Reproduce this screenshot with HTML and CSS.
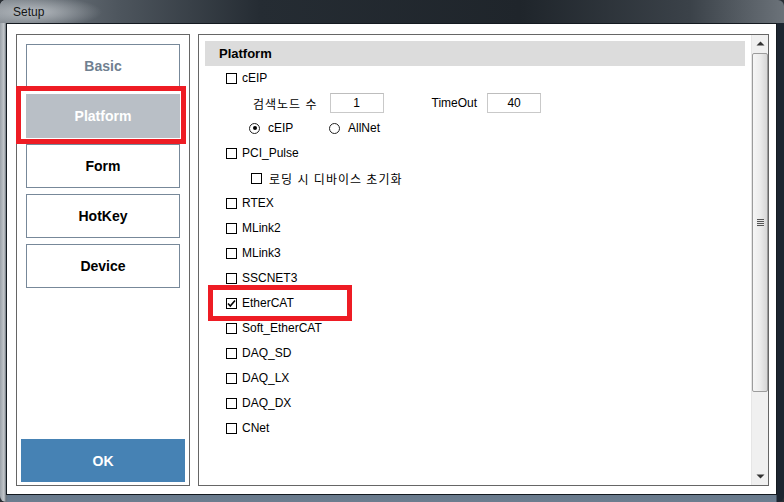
FILE: index.html
```html
<!DOCTYPE html>
<html lang="ko">
<head>
    <meta charset="UTF-8">
    <title>Setup</title>
    <link rel="stylesheet" href="styles.css">
</head>
<body>
    <div class="window">
        <div class="titlebar">
            <span class="title">Setup</span>
        </div>
        <div class="client">

            <div class="side">
                <div class="nav-btn basic">Basic</div>
                <div class="nav-btn active">Platform</div>
                <div class="nav-btn">Form</div>
                <div class="nav-btn">HotKey</div>
                <div class="nav-btn">Device</div>

                <div class="ok-btn">OK</div>

                <div class="mark mark-platform"></div>
            </div>

            <div class="panel">
                <div class="content">
                    <div class="panel-head">Platform</div>

                    <div class="item"><span class="cb"></span>cEIP</div>
                    <div class="item sub-input">
                        <span class="kr">검색노드 수</span>
                        <span class="num-box">1</span>
                        <span class="lbl-timeout">TimeOut</span>
                        <span class="num-box">40</span>
                    </div>
                    <div class="item sub-radio">
                        <span class="radio-opt"><span class="rb on"></span>cEIP</span>
                        <span class="radio-opt"><span class="rb"></span>AllNet</span>
                    </div>
                    <div class="item"><span class="cb"></span>PCI_Pulse</div>
                    <div class="item sub-check"><span class="cb"></span><span class="kr">로딩 시 디바이스 초기화</span></div>
                    <div class="item"><span class="cb"></span>RTEX</div>
                    <div class="item"><span class="cb"></span>MLink2</div>
                    <div class="item"><span class="cb"></span>MLink3</div>
                    <div class="item"><span class="cb"></span>SSCNET3</div>
                    <div class="item">
                        <span class="cb">
                            <svg width="9" height="9" viewBox="0 0 9 9"><path d="M1 4.5 L3.3 7 L8 1.5" fill="none" stroke="#000" stroke-width="1.6"/></svg>
                        </span>EtherCAT
                    </div>
                    <div class="item"><span class="cb"></span>Soft_EtherCAT</div>
                    <div class="item"><span class="cb"></span>DAQ_SD</div>
                    <div class="item"><span class="cb"></span>DAQ_LX</div>
                    <div class="item"><span class="cb"></span>DAQ_DX</div>
                    <div class="item"><span class="cb"></span>CNet</div>

                    <div class="mark mark-ethercat"></div>
                </div>

                <div class="scrollbar">
                    <div class="sb-arrow">
                        <svg width="9" height="5" viewBox="0 0 9 5"><path d="M0.5 4.5 L4.5 0.5 L8.5 4.5 Z" fill="#333"/></svg>
                    </div>
                    <div class="sb-track">
                        <div class="sb-thumb">
                            <span class="grip"></span>
                        </div>
                    </div>
                    <div class="sb-arrow">
                        <svg width="9" height="5" viewBox="0 0 9 5"><path d="M0.5 0.5 L8.5 0.5 L4.5 4.5 Z" fill="#333"/></svg>
                    </div>
                </div>
            </div>

        </div>
    </div>
</body>
</html>
```

FILE: styles.css
```css
* {
    margin: 0;
    padding: 0;
    box-sizing: border-box;
}

body {
    width: 784px;
    height: 502px;
    background-color: #2a2f35;
    font-family: "Liberation Sans", Arial, sans-serif;
    font-size: 12px;
    color: #000;
    overflow: hidden;
}

.window {
    width: 784px;
    height: 502px;
    display: flex;
    flex-direction: column;
    padding: 0 7px 7px 6px;
    border-radius: 6px;
    background:
        linear-gradient(to right, #9aa1a8 0, #c3c7cb 4px, #6d757d 6px, rgba(0,0,0,0) 8px, rgba(0,0,0,0) 776px, #1c2530 777px),
        linear-gradient(to bottom, #5b636b 0, #3c444c 30px, #2a333d 250px, #5f7184 480px, #6c7d8f 502px);
}

.titlebar {
    height: 23px;
    display: flex;
    align-items: center;
    margin: 0 -7px 0 -6px;
    padding-left: 13px;
    border-radius: 6px 6px 0 0;
    background:
        radial-gradient(ellipse 70px 16px at 32px 12px, rgba(190,195,200,0.9), rgba(190,195,200,0)),
        linear-gradient(to right, #7d848b 0, #4d555d 120px, #252c33 260px, #1f252b 520px, #3b4249 690px, #6b7279 784px);
}

.title {
    font-size: 12px;
    color: #151515;
}

.client {
    flex: 1;
    display: flex;
    gap: 8px;
    background-color: #fff;
    border: 1px solid #141a20;
    padding: 10px 7px 8px 9px;
}

/* left menu */

.side {
    width: 174px;
    border: 1px solid #666;
    padding: 9px 9px 3px 9px;
    display: flex;
    flex-direction: column;
    position: relative;
}

.nav-btn {
    height: 44px;
    margin-bottom: 6px;
    border: 1px solid #778899;
    display: flex;
    align-items: center;
    justify-content: center;
    font-size: 14px;
    font-weight: bold;
    color: #000;
}

.nav-btn.basic {
    color: #708090;
}

.nav-btn.active {
    background-color: #b9bfc6;
    border-color: #b9bfc6;
    color: #fff;
}

.ok-btn {
    margin: auto -5px 0 -5px;
    height: 43px;
    background-color: #4682b4;
    color: #fff;
    font-size: 14px;
    font-weight: bold;
    display: flex;
    align-items: center;
    justify-content: center;
}

/* right panel */

.panel {
    flex: 1;
    border: 1px solid #666;
    display: flex;
}

.content {
    flex: 1;
    padding: 6px 6px 0 6px;
    position: relative;
}

.panel-head {
    height: 25px;
    background-color: #dcdcdc;
    padding-left: 14px;
    padding-bottom: 1px;
    display: flex;
    align-items: center;
    font-size: 13px;
    font-weight: bold;
}

.item {
    height: 25px;
    display: flex;
    align-items: center;
    padding-left: 21px;
    padding-bottom: 1px;
    gap: 5px;
    white-space: nowrap;
}

.cb {
    width: 11px;
    height: 11px;
    border: 1px solid #000;
    display: inline-flex;
    align-items: center;
    justify-content: center;
    flex-shrink: 0;
}

.kr {
    font-family: "Noto Sans CJK KR", "Liberation Sans", sans-serif;
    font-size: 12px;
    letter-spacing: 1px;
}

.sub-input {
    padding-left: 48px;
    gap: 0;
}

.num-box {
    width: 54px;
    height: 20px;
    border: 1px solid #c9c9c9;
    border-top-color: #bdbdbd;
    display: inline-flex;
    align-items: center;
    justify-content: center;
    margin-left: 12px;
}

.lbl-timeout {
    margin-left: 48px;
    margin-right: -2px;
}

.sub-radio {
    padding-left: 44px;
    gap: 0;
}

.radio-opt {
    display: inline-flex;
    align-items: center;
    gap: 8px;
    width: 80px;
}

.rb {
    width: 11px;
    height: 11px;
    border: 1px solid #222;
    border-radius: 50%;
    display: inline-flex;
    align-items: center;
    justify-content: center;
}

.rb.on::after {
    content: "";
    width: 4px;
    height: 4px;
    border-radius: 50%;
    background-color: #000;
}

.sub-check {
    padding-left: 46px;
    gap: 7px;
}

/* scrollbar */

.scrollbar {
    width: 17px;
    display: flex;
    flex-direction: column;
    background-color: #f0f0f0;
    border-left: 1px solid #e6e6e6;
}

.sb-arrow {
    height: 17px;
    display: flex;
    align-items: center;
    justify-content: center;
}

.sb-track {
    flex: 1;
    padding-top: 1px;
}

.sb-thumb {
    height: 339px;
    border: 1px solid #9c9c9c;
    border-radius: 2px;
    background: linear-gradient(to right, #f6f6f6 0, #ececec 50%, #d6d6d6 100%);
    display: flex;
    align-items: center;
    justify-content: center;
}

.grip {
    width: 7px;
    height: 8px;
    background: repeating-linear-gradient(to bottom, #555 0, #555 1px, #e8e8e8 1px, #e8e8e8 2px);
}

/* annotation boxes */

.mark {
    position: absolute;
    border: 5px solid #ee1c24;
}

.mark-platform {
    left: -1px;
    top: 51px;
    width: 170px;
    height: 58px;
}

.mark-ethercat {
    left: 9px;
    top: 250px;
    width: 144px;
    height: 36px;
}
```
